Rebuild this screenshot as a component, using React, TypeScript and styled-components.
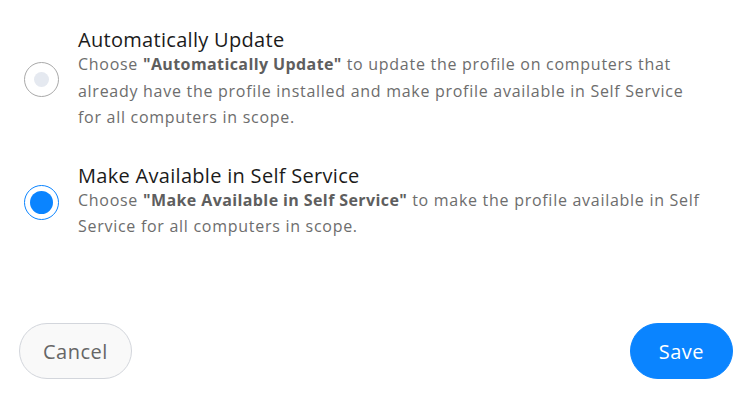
import styled, { createGlobalStyle } from 'styled-components'

const GlobalStyle = createGlobalStyle`
  html, body {
    margin: 0;
    padding: 0;
    background: #fff;
  }
  body {
    font-family: 'Open Sans', 'Liberation Sans', sans-serif;
  }
`

const Page = styled.div`
  width: 750px;
  height: 400px;
  box-sizing: border-box;
  display: flex;
  flex-direction: column;
  justify-content: space-between;
  padding: 29px 17px 21px 19px;
`

const Options = styled.div`
  display: flex;
  flex-direction: column;
  gap: 34px;
`

const Option = styled.label`
  display: flex;
  align-items: center;
  gap: 19px;
  padding-left: 5px;
  cursor: pointer;
`

const Radio = styled.span<{ $checked?: boolean }>`
  flex: none;
  width: 35px;
  height: 35px;
  box-sizing: border-box;
  border-radius: 50%;
  border: 1px solid ${(p) => (p.$checked ? '#0a84ff' : '#a9a9a9')};
  display: flex;
  align-items: center;
  justify-content: center;

  &::after {
    content: '';
    width: ${(p) => (p.$checked ? '23px' : '15px')};
    height: ${(p) => (p.$checked ? '23px' : '15px')};
    border-radius: 50%;
    background: ${(p) => (p.$checked ? '#0a84ff' : '#e5e9f0')};
  }
`

const Body = styled.div`
  display: flex;
  flex-direction: column;
`

const Title = styled.div`
  font-size: 20px;
  line-height: 22px;
  letter-spacing: 0.3px;
  color: #1b1b1b;
`

const Desc = styled.p`
  margin: 0;
  font-size: 16px;
  line-height: 26.5px;
  letter-spacing: 0.72px;
  color: #6d6d6d;
  max-width: 645px;

  strong {
    font-weight: 700;
    letter-spacing: 0.4px;
    color: #5e5e5e;
  }
`

const Footer = styled.div`
  display: flex;
  justify-content: space-between;
  align-items: center;
`

const Button = styled.button<{ $primary?: boolean }>`
  height: 56px;
  border-radius: 28px;
  font-family: inherit;
  font-size: 20px;
  letter-spacing: 0.5px;
  cursor: pointer;
  border: 1px solid ${(p) => (p.$primary ? '#0a84ff' : '#d3d6dc')};
  background: ${(p) => (p.$primary ? '#0a84ff' : '#f9f9f9')};
  color: ${(p) => (p.$primary ? '#fff' : '#666')};
  padding: 0 ${(p) => (p.$primary ? '28px' : '23px')};
`

export default function App() {
  return (
    <>
      <GlobalStyle />
      <Page>
        <Options>
          <Option>
            <Radio />
            <Body>
              <Title>Automatically Update</Title>
              <Desc>
                Choose <strong>"Automatically Update"</strong> to update the profile on computers that
                already have the profile installed and make profile available in Self Service
                <br />
                for all computers in scope.
              </Desc>
            </Body>
          </Option>
          <Option>
            <Radio $checked />
            <Body>
              <Title>Make Available in Self Service</Title>
              <Desc>
                Choose <strong>"Make Available in Self Service"</strong> to make the profile available in
                Self Service for all computers in scope.
              </Desc>
            </Body>
          </Option>
        </Options>
        <Footer>
          <Button>Cancel</Button>
          <Button $primary>Save</Button>
        </Footer>
      </Page>
    </>
  )
}
